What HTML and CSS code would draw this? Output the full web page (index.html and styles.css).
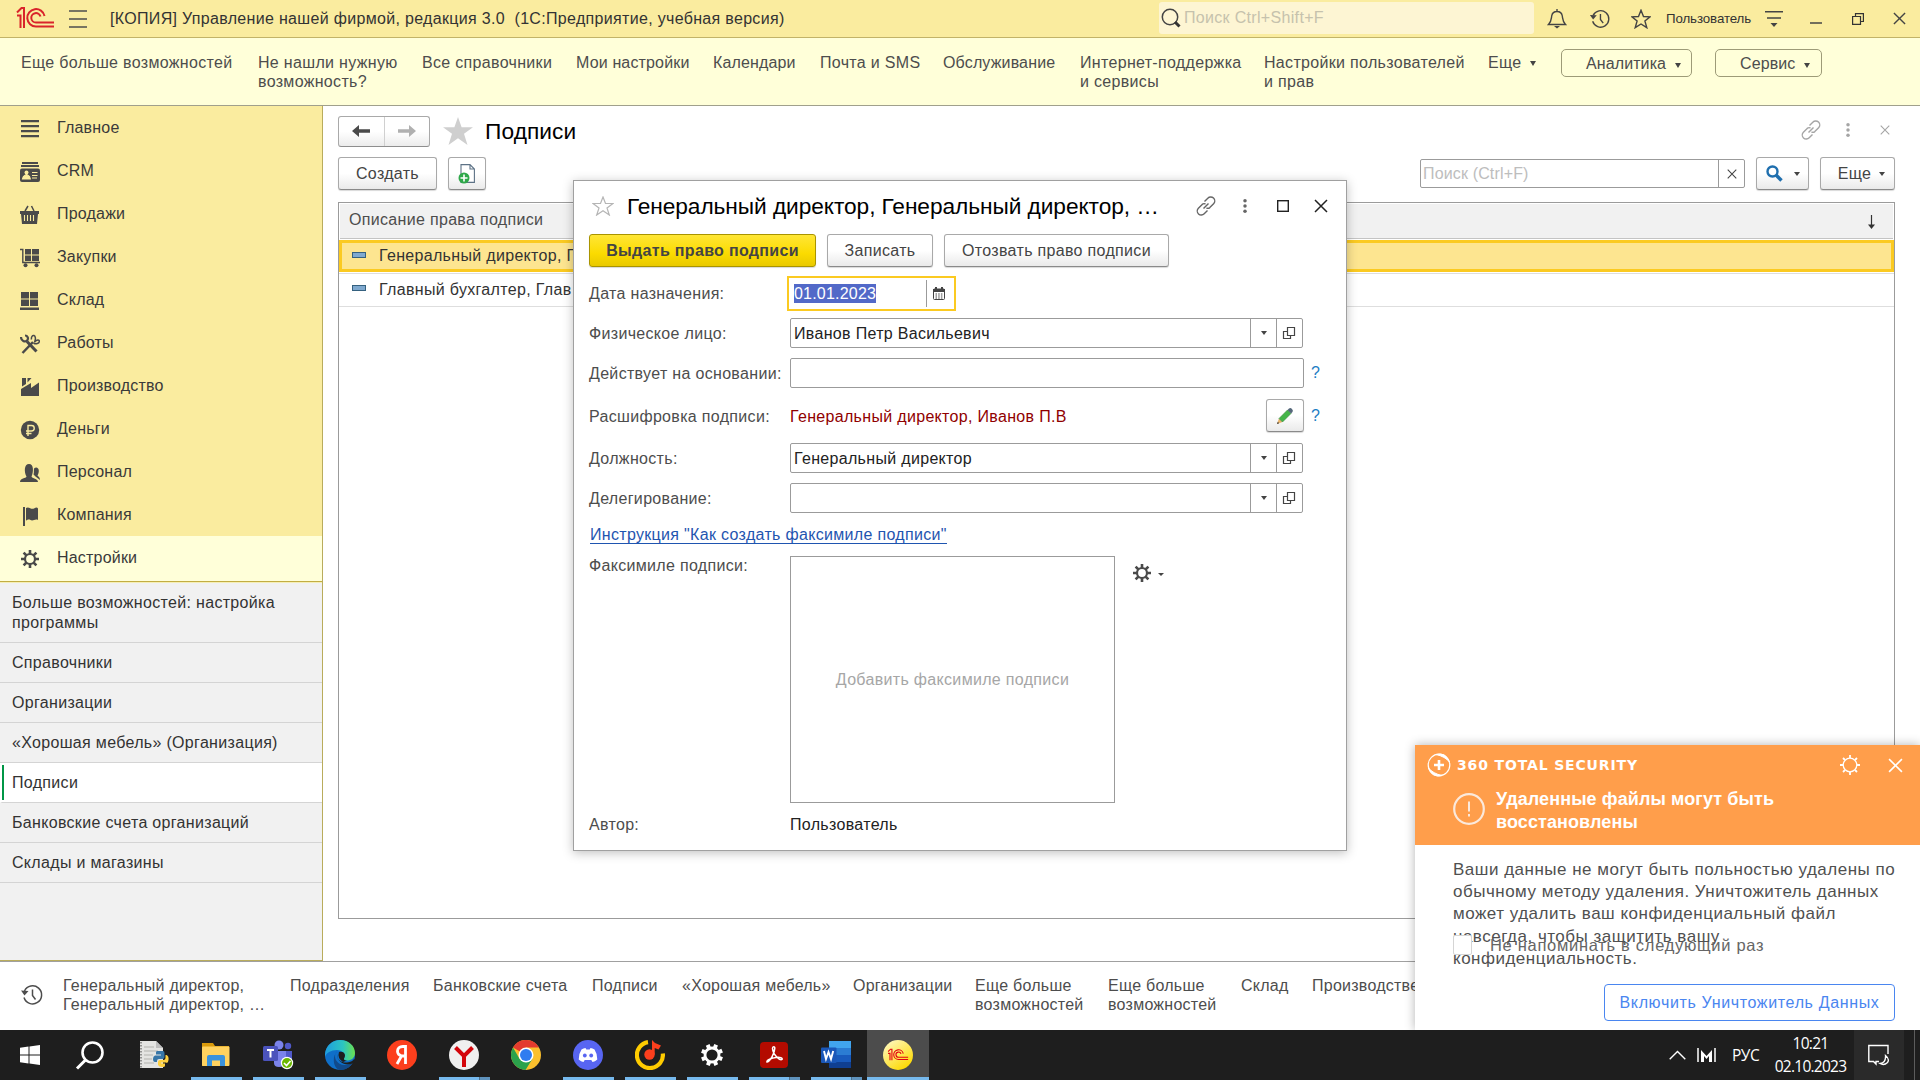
FILE: index.html
```html
<!DOCTYPE html>
<html lang="ru">
<head>
<meta charset="utf-8">
<title>Управление нашей фирмой</title>
<link rel="stylesheet" href="styles.css">
</head>
<body>
<svg class="defs" width="0" height="0">
  <defs>
    <symbol id="logo1c" viewBox="0 0 38 24">
      <g fill="none" stroke="currentColor" stroke-width="2">
        <path d="M1 6.500 5.500 2H8V22M1 9.500H4.500V22"/>
        <path d="M28.500 10A8.700 8.700 0 1 0 20 20.500H38"/>
        <path d="M24.500 10.500A4.700 4.700 0 1 0 20 16.500H38"/>
      </g>
    </symbol>
    <symbol id="history" viewBox="0 0 24 24">
      <path d="M4.500 8A9 9 0 1 1 4 14.500M12.500 6.500V12.500L15.500 16.500" fill="none" stroke="currentColor" stroke-width="1.500"/>
      <path d="M1 7.500 8.500 8 4.500 12.500Z" fill="currentColor"/>
    </symbol>
    <symbol id="gear" viewBox="0 0 20 20">
      <circle cx="10" cy="10" r="5" fill="none" stroke="currentColor" stroke-width="2.200"/>
      <path d="M10 1V5M10 15V19M1 10H5M15 10H19M3.600 3.600 6.500 6.500M13.500 13.500 16.400 16.400M3.600 16.400 6.500 13.500M13.500 6.500 16.400 3.600" stroke="currentColor" stroke-width="2.600"/>
    </symbol>
    <symbol id="link" viewBox="0 0 20 20">
      <g fill="none" stroke="currentColor" stroke-width="1.400">
        <path d="M8.500 5.500 11.800 2.200A3.900 3.900 0 0 1 17.600 7.800L13.800 11.600A3 3 0 0 1 10.500 12"/>
        <path d="M11.500 14.500 8.200 17.800A3.900 3.900 0 0 1 2.400 12.200L6.200 8.400A3 3 0 0 1 9.500 8"/>
        <path d="M7.500 12.500 12.500 7.500"/>
      </g>
    </symbol>
    <symbol id="cross" viewBox="0 0 14 14"><path d="M1 1 13 13M13 1 1 13" fill="none" stroke="currentColor" stroke-width="1.500"/></symbol>
    <symbol id="dots" viewBox="0 0 4 16"><circle cx="2" cy="2" r="2" fill="currentColor"/><circle cx="2" cy="8" r="2" fill="currentColor"/><circle cx="2" cy="14" r="2" fill="currentColor"/></symbol>
    <symbol id="open" viewBox="0 0 14 14"><path d="M5.500 1.500H12.500V9.500H5.500ZM5 5.500H1.500V12.500H8.500V10" fill="none" stroke="#444" stroke-width="1.200"/></symbol>
  </defs>
</svg>

<div class="screen">
  <header class="titlebar">
    <svg class="logo" width="38" height="24"><use href="#logo1c"/></svg>
    <svg class="burger" width="18" height="20"><path d="M0 2H18M0 10H18M0 18H18" stroke="#4d4d4d" stroke-width="1.500"/></svg>
    <span class="app-name">[КОПИЯ] Управление нашей фирмой, редакция 3.0&nbsp; (1С:Предприятие, учебная версия)</span>
    <div class="global-search">
      <svg width="20" height="20" viewBox="0 0 20 20"><circle cx="9" cy="9" r="7.700" fill="none" stroke="#444" stroke-width="1.500"/><path d="M14 14 18.500 18.500" stroke="#333" stroke-width="3"/></svg>
      <span>Поиск Ctrl+Shift+F</span>
    </div>
    <div class="title-icons">
      <svg width="20" height="20" viewBox="0 0 20 20"><path d="M1.500 15.500C4.500 12.500 4.200 10 4.700 7 5.200 4 7.500 2.500 10 2.500S14.800 4 15.300 7C15.800 10 15.500 12.500 18.500 15.500ZM10 0V3" fill="none" stroke="#444" stroke-width="1.400"/><path d="M7 17H13L10 19.500Z" fill="#444"/></svg>
      <svg width="22" height="22"><use href="#history"/></svg>
      <svg width="20" height="20" viewBox="0 0 20 20"><path d="M10 1.200 12.500 7.500 19 7.800 13.900 12 15.800 18.700 10 15 4.200 18.700 6.100 12 1 7.800 7.500 7.500Z" fill="none" stroke="#444" stroke-width="1.400"/></svg>
      <span class="user">Пользователь</span>
      <svg width="18" height="18" viewBox="0 0 18 18"><path d="M0 1.700H18M2 8H16" stroke="#444" stroke-width="1.500"/><path d="M5.500 13H12.500L9 17Z" fill="#444"/></svg>
      <svg width="12" height="14"><path d="M0 11H12" stroke="#444" stroke-width="1.500"/></svg>
      <svg width="12" height="12" viewBox="0 0 12 12"><path d="M.6 3.500H8.500V11.400H.6ZM3.500 3.500V.6H11.400V8.500H8.500" fill="none" stroke="#333" stroke-width="1.200"/></svg>
      <svg width="13" height="13"><use href="#cross"/></svg>
    </div>
  </header>

  <nav class="functions">
    <a>Еще больше возможностей</a>
    <a>Не нашли нужную<br>возможность?</a>
    <a>Все справочники</a>
    <a class="tight">Мои настройки</a>
    <a class="tight">Календари</a>
    <a>Почта и SMS</a>
    <a class="tight">Обслуживание</a>
    <a>Интернет-поддержка<br>и сервисы</a>
    <a>Настройки пользователей<br>и прав</a>
    <a>Еще<i class="caret gap"></i></a>
    <a class="pill">Аналитика<i class="caret"></i></a>
    <a class="pill">Сервис<i class="caret"></i></a>
  </nav>

  <div class="middle">
    <aside class="sidebar">
      <ul class="sections">
        <li><svg width="20" height="20" viewBox="0 0 20 20"><path d="M1 2.200H19M1 7.200H19M1 12.200H19M1 17.200H19" stroke="#4a4a4a" stroke-width="2.200"/></svg>Главное</li>
        <li><svg width="20" height="20" viewBox="0 0 20 20"><path d="M2 1H18M1 4H19" stroke="#4a4a4a" stroke-width="1.800"/><rect y="6.500" width="20" height="13.500" rx="2" fill="#4a4a4a"/><circle cx="6.500" cy="10.500" r="2" fill="#faec9f"/><path d="M2.500 17C3 13.500 5 13.500 6.500 12.500 8 13.500 10 13.500 10.300 17ZM12 10.500H17.500M12 13.500H17.500M12 16H17" fill="#faec9f" stroke="#faec9f" stroke-width="1.200"/></svg>CRM</li>
        <li><svg width="20" height="20" viewBox="0 0 20 20"><path d="M0 6H19V9H18L17 19H2L1 9H0Z" fill="#4a4a4a"/><path d="M5 6 8 1M14 6 11.500 1" stroke="#4a4a4a" stroke-width="1.500"/><path d="M4.500 10V16M7.500 10V16M10.500 10V16M13.500 10V16" stroke="#faec9f" stroke-width="1.100"/></svg>Продажи</li>
        <li><svg width="20" height="20" viewBox="0 0 20 20"><path d="M0 1.500H2.800V14.500H20" fill="none" stroke="#4a4a4a" stroke-width="1.400"/><path d="M5 1H11V6.500H5ZM12 1H19V6.500H12ZM5 7.500H11V13H5ZM12 7.500H19V13H12Z" fill="#4a4a4a"/><circle cx="5.500" cy="17.200" r="2" fill="#4a4a4a"/><circle cx="16.500" cy="17.200" r="2" fill="#4a4a4a"/></svg>Закупки</li>
        <li><svg width="20" height="20" viewBox="0 0 20 20"><path d="M1 1H9V7.500H1ZM10 1H18V7.500H10ZM1 8.500H9V15H1ZM10 8.500H18V15H10ZM0 16.500H19V19H0Z" fill="#4a4a4a"/></svg>Склад</li>
        <li><svg width="20" height="20" viewBox="0 0 20 20"><g fill="none" stroke="#4a4a4a"><path d="M2.500 19 13 8" stroke-width="2.500"/><path d="M7 7.500 16.500 17.500" stroke-width="3"/><path d="M1 3C1 7 5 8.500 7 6.500S7.500 1.500 5 1.500" stroke-width="2.200"/><path d="M11.500 5.500C11 3 12.500 1 14 1.500S16 5 14.500 8C17 5.500 19.500 5.500 19.300 7.500S16 10.500 13.500 9" stroke-width="1.500"/></g></svg>Работы</li>
        <li><svg width="20" height="20" viewBox="0 0 20 20"><path d="M1 19V12L11 6V11L19 5.500V19ZM2 1H6V7L2 9.500ZM7.500 1H11.500L7.500 5.500Z" fill="#4a4a4a"/></svg>Производство</li>
        <li><svg width="20" height="20" viewBox="0 0 20 20"><circle cx="10" cy="10" r="9.200" fill="#4a4a4a"/><path d="M8 16V5.500H11.500A2.700 2.700 0 0 1 11.500 11H6M6 13.500H11.500" fill="none" stroke="#faec9f" stroke-width="1.400"/></svg>Деньги</li>
        <li><svg width="20" height="20" viewBox="0 0 20 20"><path d="M0 19C0 15 6 15.500 6.500 13.500 4 9 4 1 9 1S13.500 9 11.500 13.500C12 15.500 18 15.500 18 19ZM13.500 11.500C14.300 9 13.500 6.500 14.200 5.200 16 3.500 19 4.500 18.800 8 18.700 10 18 11.500 17.500 12.500 18 13.500 20 14 20 17L15.500 13.500Z" fill="#4a4a4a"/></svg>Персонал</li>
        <li><svg width="20" height="20" viewBox="0 0 20 20"><path d="M3 1H5V20H3ZM6 2C9 0 11 4 14 2.500 16 1.500 17 1 18 2.500V14C15 12.500 13 15.500 10.500 14 8.500 13 7.500 14 6 14.500Z" fill="#4a4a4a"/></svg>Компания</li>
        <li class="current"><svg width="20" height="20"><use href="#gear"/></svg>Настройки</li>
      </ul>
      <ul class="commands">
        <li class="two">Больше возможностей: настройка программы</li>
        <li>Справочники</li>
        <li>Организации</li>
        <li>«Хорошая мебель» (Организация)</li>
        <li class="active">Подписи</li>
        <li>Банковские счета организаций</li>
        <li>Склады и магазины</li>
      </ul>
    </aside>

    <main class="page">
      <div class="page-head">
        <div class="nav-group">
          <span><svg width="18" height="14" viewBox="0 0 18 14"><path d="M0 7 7 1V5.200H18V8.800H7V13Z" fill="#4a4a4a"/></svg></span>
          <span><svg width="18" height="14" viewBox="0 0 18 14"><path d="M18 7 11 1V5.200H0V8.800H11V13Z" fill="#b0b0b0"/></svg></span>
        </div>
        <svg class="fav" width="30" height="28" viewBox="0 0 30 28"><path d="M15 0 18.600 10.200H30L21 16.800 24.500 28 15 21.200 5.500 28 9 16.800 0 10.200H11.400Z" fill="#cfcfcf"/></svg>
        <h1>Подписи</h1>
        <div class="head-icons">
          <svg width="20" height="20"><use href="#link"/></svg>
          <svg width="4" height="14"><use href="#dots"/></svg>
          <svg width="10" height="10"><use href="#cross"/></svg>
        </div>
      </div>
      <div class="toolbar">
        <button class="btn create">Создать</button>
        <button class="btn copy"><svg width="18" height="20" viewBox="0 0 18 20"><path d="M3 .6H12L16.400 5V18.400H3ZM12 .6V5H16.400" fill="#fff" stroke="#5d7286" stroke-width="1.100"/><circle cx="6" cy="14" r="5.500" fill="#2fa84a"/><path d="M2.500 14H9.500M6 10.500V17.500" stroke="#fff" stroke-width="1.600"/></svg></button>
        <div class="list-search"><span>Поиск (Ctrl+F)</span><b><svg width="10" height="10"><use href="#cross"/></svg></b></div>
        <button class="btn find"><svg width="17" height="17" viewBox="0 0 17 17"><circle cx="6.500" cy="6.500" r="5" fill="none" stroke="#1f6fae" stroke-width="2.400"/><path d="M10 10 15.500 15.500" stroke="#1f6fae" stroke-width="3.400"/></svg><i class="caret small"></i></button>
        <button class="btn more">Еще<i class="caret small"></i></button>
      </div>
      <div class="grid">
        <div class="grid-head"><span>Описание права подписи</span><svg width="9" height="14" viewBox="0 0 9 14"><path d="M4.500 0V12" stroke="#333" stroke-width="1.200"/><path d="M1 9.500H8L4.500 14Z" fill="#333"/></svg></div>
        <div class="grid-row selected"><em></em>Генеральный директор, Г</div>
        <div class="grid-row"><em></em>Главный бухгалтер, Глав</div>
      </div>
    </main>
  </div>

  <footer class="recent">
    <svg width="24" height="24"><use href="#history"/></svg>
    <a>Генеральный директор,<br>Генеральный директор, …</a>
    <a>Подразделения</a>
    <a>Банковские счета</a>
    <a>Подписи</a>
    <a>«Хорошая мебель»</a>
    <a>Организации</a>
    <a>Еще больше<br>возможностей</a>
    <a>Еще больше<br>возможностей</a>
    <a>Склад</a>
    <a>Производстве</a>
  </footer>

  <div class="taskbar">
    <div class="apps">
      <div class="app start"><svg width="20" height="20" viewBox="0 0 20 20"><path d="M0 2.800 8.500 1.600V9.500H0ZM9.500 1.400 20 0V9.500H9.500ZM0 10.500H8.500V18.400L0 17.200ZM9.500 10.500H20V20L9.500 18.600Z" fill="#fff"/></svg></div>
      <div class="app find-app"><svg width="30" height="30" viewBox="0 0 30 30"><circle cx="17.500" cy="12.500" r="10" fill="none" stroke="#fff" stroke-width="2.600"/><path d="M10.500 20 2 28.500" stroke="#fff" stroke-width="3"/></svg></div>
      <div class="app"><svg width="30" height="30" viewBox="0 0 30 30"><path d="M1 1H17L24 8V28H1Z" fill="#e4e4e2"/><path d="M17 1V8H24Z" fill="#bdbdbd"/><path d="M5 7H15M5 11H19M5 15H14M5 19H13M5 23H15" stroke="#c2c2c0" stroke-width="1.500"/><path d="M2 2V28" stroke="#777" stroke-width="1.500" stroke-dasharray="1.500 1.500"/><path d="M18 11H24Q25.500 11 25.500 13V17Q25.500 19 23.500 19H20Q18 19 18 21V22H16Q14 22 14 19T16 15.500H22V14.500H17V12.500Q17 11 18 11Z" fill="#3776a8"/><path d="M26.500 15H27.500Q30 16 29.500 20T27 22.500H22V23.500H26V25.500Q26 27 23 27T19 25V22Q19 20 21 20H24.500Q26.500 20 26.500 18Z" fill="#ffd140"/></svg></div>
      <div class="app run"><svg width="30" height="30" viewBox="0 0 30 30"><path d="M1 3H12L14 6H28V26H1Z" fill="#d99a0b"/><rect x="1" y="6.500" width="27.500" height="19.500" rx="1" fill="#ffd25f"/><path d="M6 26V17Q6 15 8 15H22Q24 15 24 17V26H19V20.500H11V26Z" fill="#3a92dc"/></svg></div>
      <div class="app run"><svg width="32" height="32" viewBox="0 0 32 32"><circle cx="17" cy="6" r="4.500" fill="#7b83eb"/><circle cx="26" cy="7" r="3.200" fill="#5059c9"/><path d="M12 12H24V24Q22 28 17 28T12 24Z" fill="#7b83eb"/><path d="M24 12H30V21Q29 25 24 25Z" fill="#5059c9"/><rect x="1" y="7" width="15" height="15" rx="1.500" fill="#4b53bc"/><path d="M5 11H12M8.500 11V18.500" stroke="#fff" stroke-width="2"/><circle cx="25" cy="24" r="6.200" fill="#fff"/><circle cx="25" cy="24" r="5" fill="#6bb700"/><path d="M22 24 24.500 26.500 28.500 22" fill="none" stroke="#fff" stroke-width="1.600"/></svg></div>
      <div class="app run"><svg width="30" height="30" viewBox="0 0 30 30"><defs><linearGradient id="e1" x1="0" x2="1"><stop offset="0" stop-color="#1e9de0"/><stop offset=".6" stop-color="#2cc5c0"/><stop offset="1" stop-color="#6be04e"/></linearGradient></defs><circle cx="15" cy="15" r="15" fill="#0f6fc9"/><path d="M0 14C1 5 8 0 15 0 24 0 30 6 30 13 30 18 26 20.500 22 20.500 19 20.500 18 19.500 19 18 21 14 17 10 12 10 6 10 1 13 0 17Z" fill="url(#e1)"/><path d="M12 11.500C8 15 10 24 19 25 23 25.500 26 24 27.500 23 24 29 18 30.500 14 30 8 27 7 17 12 11.500Z" fill="#114a8b"/><path d="M12.500 14C11 19 16 23 22 22.500 26 22 28 21 29 19L32 22 27.500 23.500C20 27 11 21 12.500 14Z" fill="#1e1e1e"/><path d="M14 12Q19 11 20 15 20 17 19 18.500 18.500 20.500 22 20.500L18 22Q12 18 14 12Z" fill="#1e1e1e"/></svg></div>
      <div class="app"><svg width="30" height="30" viewBox="0 0 30 30"><circle cx="15" cy="15" r="15" fill="#fc3f1d"/><path d="M18.500 24V6.500H15.800C12.500 6.500 10.500 8.500 10.500 11.300 10.500 14 12 15.300 15 16H18.500M14.500 16 10 24" fill="none" stroke="#fff" stroke-width="2.800"/></svg></div>
      <div class="app run multi"><svg width="30" height="30" viewBox="0 0 30 30"><circle cx="15" cy="15" r="15" fill="#f0f0f0"/><path d="M6.500 7.500 15 16 23.500 7.500M15 15V27" fill="none" stroke="#d4060c" stroke-width="4"/></svg></div>
      <div class="app"><svg width="30" height="30" viewBox="0 0 30 30"><circle cx="15" cy="15" r="15" fill="#fbc02d"/><path d="M15 15 2 7.500A15 15 0 0 1 28 7.500H15Z" fill="#e33b2e"/><path d="M2 7.500A15 15 0 0 0 14.500 30L21.500 18.700 15 15 8.500 18.700Z" fill="#2ba24c"/><circle cx="15" cy="15" r="7.500" fill="#fff"/><circle cx="15" cy="15" r="6" fill="#2f7cf0"/></svg></div>
      <div class="app run"><svg width="30" height="30" viewBox="0 0 30 30"><circle cx="15" cy="15" r="15" fill="#5865f2"/><path d="M8.500 9.500Q10.500 8.300 12.500 8L13.300 9.500H16.700L17.500 8Q19.500 8.300 21.500 9.500 24.500 14 24.300 19.500 22 21.500 19.500 22L18.300 20H11.700L10.500 22Q8 21.500 5.700 19.500 5.500 14 8.500 9.500Z" fill="#fff"/><ellipse cx="11.800" cy="15.500" rx="1.900" ry="2.100" fill="#5865f2"/><ellipse cx="18.200" cy="15.500" rx="1.900" ry="2.100" fill="#5865f2"/></svg></div>
      <div class="app run"><svg width="30" height="30" viewBox="0 0 30 30"><path d="M13 2.200A13 13 0 1 0 27.800 13.500" fill="none" stroke="#fc0" stroke-width="4.200"/><circle cx="14.500" cy="14.500" r="5.200" fill="#fc3f1d"/><path d="M17 14V0L20 3 26 5.500 23.500 9.500 19.700 8V14.500Z" fill="#fc3f1d"/></svg></div>
      <div class="app run"><svg width="24" height="24" viewBox="0 0 24 24"><circle cx="12" cy="12" r="7" fill="none" stroke="#fff" stroke-width="2.800"/><path d="M12 1V5M12 19V23M1 12H5M19 12H23M4.200 4.200 7 7M17 17 19.800 19.800M4.200 19.800 7 17M17 7 19.800 4.200" stroke="#fff" stroke-width="4" transform="rotate(22 12 12)"/></svg></div>
      <div class="app run multi"><svg width="28" height="28" viewBox="0 0 28 28"><rect y="1" width="28" height="26" rx="4" fill="#b30b00"/><path d="M7 21C6 19 12 17 16 16.500 20 16 23 17 22 18.500 20 20 13 14 12.500 7.500 12.500 5 15 5 14.800 7.500 14.500 12 10.500 20 7 21Z" fill="none" stroke="#fff" stroke-width="1.500"/></svg></div>
      <div class="app run multi"><svg width="30" height="28" viewBox="0 0 30 28"><path d="M8 0H30V7H8Z" fill="#41a5ee"/><path d="M8 7H30V14H8Z" fill="#2b7cd3"/><path d="M8 14H30V21H8Z" fill="#185abd"/><path d="M8 21H30V27H8Z" fill="#103f91"/><rect x="0" y="6.500" width="15.500" height="15.500" rx="1" fill="#1a57b8"/><path d="M3 10 5 18 7.500 11 10 18 12.200 10" fill="none" stroke="#fff" stroke-width="1.900"/></svg></div>
      <div class="app run front"><svg width="30" height="30" viewBox="0 0 30 30"><defs><linearGradient id="y1" x1="0" y1="0" x2=".7" y2="1"><stop offset="0" stop-color="#fffbd0"/><stop offset="1" stop-color="#fdd900"/></linearGradient></defs><circle cx="15" cy="15" r="15" fill="url(#y1)"/><svg x="4.500" y="8" width="21" height="13.500" color="#e3000f"><use href="#logo1c"/></svg></svg></div>
    </div>
    <div class="tray">
      <svg width="17" height="10" viewBox="0 0 17 10"><path d="M.7 9.300 8.500 1.500 16.300 9.300" fill="none" stroke="#fff" stroke-width="1.400"/></svg>
      <svg class="monitor" width="19" height="14" viewBox="0 0 19 14"><path d="M1 0V14M18 0V14" stroke="#fff" stroke-width="1.500"/><path d="M4 14V2L9.500 8 15 2V14H12V8L9.500 11 7 8V14Z" fill="#fff"/></svg>
      <span class="lang">РУС</span>
      <div class="clock"><span>10:21</span><span>02.10.2023</span></div>
      <div class="notice"><svg width="22" height="22" viewBox="0 0 22 22"><path d="M11 17.500H8V20L5.500 17.500H.8V1.500H20V10" fill="none" stroke="#fff" stroke-width="1.400"/><path d="M17.500 11.500Q22 15 19.500 18.500 16 22 12 19.500 18 19 17.500 11.500Z" fill="none" stroke="#fff" stroke-width="1.300"/></svg></div>
      <i class="peek"></i>
    </div>
  </div>

  <section class="dialog">
    <div class="dialog-head">
      <svg width="22" height="20" viewBox="0 0 22 20"><path d="M11 1 13.500 7.500H21L15 12 17.300 19 11 14.700 4.700 19 7 12 1 7.500H8.500Z" fill="none" stroke="#b5b5b5" stroke-width="1.200"/></svg>
      <h2>Генеральный директор, Генеральный директор, …</h2>
      <div class="dialog-icons">
        <svg width="20" height="20"><use href="#link"/></svg>
        <svg width="4" height="14"><use href="#dots"/></svg>
        <svg width="12" height="12"><rect x=".7" y=".7" width="10.600" height="10.600" fill="none" stroke="#222" stroke-width="1.400"/></svg>
        <svg width="14" height="14" color="#222"><use href="#cross"/></svg>
      </div>
    </div>
    <div class="dialog-buttons">
      <button class="btn primary">Выдать право подписи</button>
      <button class="btn save">Записать</button>
      <button class="btn revoke">Отозвать право подписи</button>
    </div>
    <div class="form">
      <label>Дата назначения:</label>
      <div class="date"><mark>01.01.2023</mark><b><svg width="12" height="13" viewBox="0 0 12 13"><rect x=".5" y="2" width="11" height="10.500" rx="1" fill="#fff" stroke="#444"/><path d="M0 2H12V5H0ZM2 0H4V3H2ZM8 0H10V3H8Z" fill="#444"/><path d="M2.500 7H9.800M2.500 9H9.800M2.500 11H9.800" stroke="#444" stroke-width="1.200" stroke-dasharray="1.500 1.200"/></svg></b></div>

      <label>Физическое лицо:</label>
      <div class="field"><span>Иванов Петр Васильевич</span><b><i class="caret small"></i></b><b><svg width="14" height="14"><use href="#open"/></svg></b></div>

      <label>Действует на основании:</label>
      <div class="line"><div class="field wide"></div><a class="help">?</a></div>

      <label>Расшифровка подписи:</label>
      <div class="line"><span class="decode">Генеральный директор, Иванов П.В</span><button class="btn edit"><svg width="18" height="18" viewBox="0 0 18 18"><path d="M1 17 3 11.500 6.500 15Z" fill="#e8b36a"/><path d="M3 11.500 11.500 3 15 6.500 6.500 15Z" fill="#45b549" stroke="#39863c" stroke-width=".6"/><path d="M11.500 3 13 1.500Q14.500 .5 16 2T16.500 5L15 6.500Z" fill="#55677a"/><path d="M1 17 1.800 14.800 3.200 16.200Z" fill="#333"/></svg></button><a class="help">?</a></div>

      <label>Должность:</label>
      <div class="field"><span>Генеральный директор</span><b><i class="caret small"></i></b><b><svg width="14" height="14"><use href="#open"/></svg></b></div>

      <label>Делегирование:</label>
      <div class="field"><span></span><b><i class="caret small"></i></b><b><svg width="14" height="14"><use href="#open"/></svg></b></div>

      <a class="howto">Инструкция "Как создать факсимиле подписи"</a>

      <label class="top">Факсимиле подписи:</label>
      <div class="fax"><div class="fax-box">Добавить факсимиле подписи</div><svg width="20" height="20"><use href="#gear"/></svg><i class="caret tiny"></i></div>

      <label>Автор:</label>
      <span class="author">Пользователь</span>
    </div>
  </section>

  <section class="toast">
    <div class="toast-head">
      <div class="brand">
        <svg width="24" height="24" viewBox="0 0 24 24"><circle cx="12" cy="12" r="10.800" fill="none" stroke="#fff" stroke-width="1.200"/><path d="M9 1.500Q19-1 22.500 9 18 3.500 9 1.500ZM15 22.500Q5 25 1.500 15 6 20.500 15 22.500Z" fill="#fff" stroke="#fff"/><path d="M7 12H17M12 7V17" stroke="#fff" stroke-width="2.600"/></svg>
        <span>360 TOTAL SECURITY</span>
        <svg class="toast-gear" width="20" height="20" viewBox="0 0 20 20"><circle cx="10" cy="10" r="6.800" fill="none" stroke="#fff" stroke-width="1.300"/><path d="M10 0V3M10 17V20M0 10H3M17 10H20M3 3 5 5M15 15 17 17M3 17 5 15M15 5 17 3" stroke="#fff" stroke-width="1.800"/></svg>
        <svg width="15" height="15" color="#fff"><use href="#cross"/></svg>
      </div>
      <div class="alert">
        <svg width="32" height="32" viewBox="0 0 32 32"><circle cx="16" cy="16" r="14.800" fill="none" stroke="#fbe9dc" stroke-width="2.200"/><path d="M16 8.500V18.500M16 21V23.500" stroke="#fbe9dc" stroke-width="2"/></svg>
        <strong>Удаленные файлы могут быть<br>восстановлены</strong>
      </div>
    </div>
    <p>Ваши данные не могут быть польностью удалены по<br>обычному методу удаления. Уничтожитель данных<br>может удалить ваш конфиденциальный файл<br>навсегда, чтобы защитить вашу<br>конфиденциальность.</p>
    <div class="remind"><i></i><span>Не напоминать в следующий раз</span></div>
    <button class="enable">Включить Уничтожитель Данных</button>
  </section>
</div>
</body>
</html>
```
FILE: styles.css
```css
* { box-sizing: border-box; }
body { margin: 0; font: 16px/20px "Liberation Sans", Arial, sans-serif; color: #333; background: #fff; }
ul, h1, h2, p { margin: 0; padding: 0; list-style: none; font-weight: normal; }
svg { display: block; flex: none; }
.defs { position: absolute; }
.screen { position: relative; width: 1920px; height: 1080px; overflow: hidden; display: flex; flex-direction: column; letter-spacing: .32px; }
button { font: inherit; letter-spacing: inherit; color: inherit; }
.caret { display: inline-block; flex: none; border: 3.500px solid transparent; border-top: 5px solid #444; border-bottom: 0; }
.caret.small { border-width: 4px 3px 0; }
.caret.tiny { border-width: 3px 3px 0; }

.titlebar { flex: none; height: 38px; background: #faec9f; border-bottom: 1px solid #c2b368; display: flex; align-items: center; }
.logo { margin-left: 16px; margin-top: -1px; color: #d9242b; }
.burger { margin-left: 15px; }
.app-name { margin-left: 23px; width: 1049px; white-space: nowrap; }
.global-search { width: 375px; height: 32px; background: #fdf5d3; border-radius: 3px; display: flex; align-items: center; gap: 3px; padding-left: 2px; color: #c6c2ad; margin-top: -1px; }
.title-icons { display: grid; grid-template-columns: 42px 42px 35px 99px 45px 42px 41px 20px; margin-left: 13px; align-items: center; color: #444; }
.user { font-size: 13.300px; letter-spacing: -.1px; color: #333; }

.functions { flex: none; height: 68px; background: #ffffd9; border-bottom: 1px solid #a0a08c; display: grid; grid-template-columns: 237px 164px 154px 137px 107px 123px 137px 184px 224px 73px 154px 108px; padding: 14.500px 0 0 21px; line-height: 19px; color: #4d4d4d; white-space: nowrap; }
.functions a { padding-top: .5px; }
.functions .tight { letter-spacing: .15px; }
.caret.gap { margin: 0 0 2px 8px; }
.functions .pill { width: 131px; height: 28px; border: 1px solid #9d9b78; border-radius: 5px; margin-top: -4px; padding: 4px 0 0 24px; letter-spacing: .1px; }
.functions .pill:last-child { width: 107px; }
.pill .caret { margin: 0 0 1px 9px; }

.middle { flex: none; height: 855px; display: flex; }
.sidebar { flex: none; width: 323px; background: #f1f1f1; border-right: 1px solid #b9ac5c; border-bottom: 1px solid #b9ac5c; }
.sections { background: #faec9f; border-bottom: 1px solid #c2ad42; height: 476px; }
.sections li { height: 43px; display: flex; align-items: center; gap: 17px; padding-left: 20px; color: #3a3a3a; letter-spacing: .2px; }
.sections svg { margin-top: 2px; color: #4a4a4a; }
.sections .current { height: 45px; padding-bottom: 2px; background: #ffffd9; }
.commands { border-top: 1px solid #f5efb6; }
.commands li { height: 40px; border-bottom: 1px solid #d4d4d4; padding: 10px 12px 0; }
.commands .two { height: 60px; }
.commands .active { background: #fff; border-left: 2px solid #fff; position: relative; padding-left: 10px; }
.commands .active::before { content: ""; position: absolute; left: 0; top: 2px; width: 2px; height: 35px; background: #009646; }

.page { flex: 1; padding: 10px 25px 0 15px; }
.page-head { height: 30px; display: flex; align-items: center; }
.nav-group { display: flex; width: 92px; height: 31px; border: 1px solid #a9a9a9; border-bottom-color: #8e8e8e; border-radius: 3px; background: linear-gradient(#fff 50%, #ececec); }
.nav-group span { flex: 1; display: flex; align-items: center; justify-content: center; }
.nav-group span + span { border-left: 1px solid #d0d0d0; }
.fav { margin-left: 13px; }
h1 { font-size: 22.700px; line-height: 28px; color: #000; margin-left: 12px; letter-spacing: .1px; }
.head-icons { margin-left: auto; display: flex; align-items: center; gap: 25px; color: #a5a5a5; padding: 0 5px 2px 0; }
.head-icons svg:last-child { margin-left: 5px; }
.toolbar { display: flex; align-items: center; margin-top: 11px; height: 33px; }
.btn { height: 33px; border: 1px solid #a9a9a9; border-bottom: 1px solid #8a8a8a; border-radius: 3px; background: linear-gradient(#fff 50%, #eaeaea); display: flex; align-items: center; justify-content: center; padding: 0; color: #444; white-space: nowrap; box-shadow: 0 1px 1px #d9d9d9; }
.create { width: 99px; }
.copy { width: 38px; margin-left: 11px; }
.list-search { margin-left: auto; width: 325px; height: 29px; border: 1px solid #9b9b9b; border-radius: 2px; display: flex; color: #bdbdbd; }
.list-search span { flex: 1; padding: 4px 2px; letter-spacing: .15px; }
.list-search b, .field b { flex: none; width: 26px; border-left: 1px solid #9b9b9b; display: flex; align-items: center; justify-content: center; color: #444; }
.find { width: 53px; margin-left: 11px; gap: 11px; }
.more { width: 75px; margin-left: 11px; gap: 8px; padding-left: 8px; }
.grid { margin-top: 12px; height: 717px; border: 1px solid #9b9b9b; }
.grid-head { height: 37px; border: 1px solid #fff; border-bottom: 0; background: #f1f1f1; box-shadow: inset 0 -1px #fff, inset 0 -2px #c4c4c4; display: flex; justify-content: space-between; padding: 6px 17px 0 9px; color: #4d4d4d; }
.grid-head svg { margin-top: 5px; }
.grid-row { height: 34px; border-bottom: 1px solid #dedede; display: flex; align-items: center; padding-left: 13px; white-space: nowrap; }
.grid-row em { width: 14px; height: 6px; background: #7fa9cf; border: 1px solid #35617f; margin: -3px 13px 0 0; }
.grid-row.selected { height: 32px; border: 3px solid #fbca21; background: #fde590; padding-left: 10px; box-shadow: 0 1px #fff, 0 2px #dedede; margin-bottom: 1px; }

.recent { flex: none; height: 69px; border-top: 1px solid #a0a0a0; display: grid; grid-template-columns: 43px 227px 143px 159px 90px 171px 122px 133px 133px 71px 120px; padding: 14px 0 0 20px; line-height: 19px; color: #4d4d4d; white-space: nowrap; letter-spacing: .25px; }
.recent svg { margin-top: 7px; }

.taskbar { flex: none; height: 50px; background: #1e1e1e; display: flex; justify-content: space-between; color: #fff; }
.apps { display: flex; }
.app { width: 62px; height: 50px; display: flex; align-items: center; justify-content: center; position: relative; }
.app.start { width: 60px; }
.app.find-app { width: 63px; padding-right: 3px; }
.app.run::after { content: ""; position: absolute; left: 6px; bottom: 0; width: 51px; height: 3px; background: #76b9ed; }
.app.multi::after { background: linear-gradient(90deg, #76b9ed 40px, #3c4c59 40px, #5f93bd 41px); }
.app.front { background: #4c4c4c; }
.app.front::after { left: 0; width: 62px; }
.tray { display: flex; align-items: center; font: 16px/23px "Open Sans", "Noto Sans", sans-serif; letter-spacing: -.5px; }
.monitor { margin: 0 16px 0 11px; }
.lang { width: 43px; font-size: 15.500px; }
.clock { width: 71px; margin-right: 8px; display: flex; flex-direction: column; align-items: center; white-space: nowrap; font-size: 15.500px; letter-spacing: -.75px; }
.notice { width: 50px; height: 50px; background: #2a2a2a; display: flex; align-items: center; justify-content: center; }
.peek { width: 6px; height: 50px; margin-left: 10px; border-left: 1px solid #5c5c5c; }

.dialog { position: absolute; left: 573px; top: 180px; width: 774px; height: 671px; background: #fff; border: 1px solid #a0a0a0; box-shadow: 0 2px 10px rgba(0,0,0,.25); padding: 0 15px; }
.dialog-head { height: 53px; display: flex; align-items: center; padding: 0 0 3px 3px; }
h2 { font-size: 22.700px; line-height: 28px; letter-spacing: -.06px; color: #000; margin-left: 13px; white-space: nowrap; }
.dialog-icons { margin-left: auto; display: flex; align-items: center; color: #666; padding-right: 3px; gap: 26px; }
.dialog-icons svg:first-child { margin-right: 1px; }
.dialog-icons svg:nth-child(2) { margin-right: 4px; margin-left: 0; }
.dialog-icons svg:last-child { margin-left: -1px; }
.dialog-buttons { display: flex; gap: 11px; height: 33px; }
.primary { width: 227px; background: linear-gradient(#ffe636, #fbdb00 60%, #e9c900); border-color: #a99400; font-weight: bold; }
.save { width: 106px; }
.revoke { width: 225px; }
.form { display: grid; grid-template-columns: 201px 1fr; grid-template-rows: 40px 40px 40px 45px 40px 40px 32px 257px 34px; align-items: center; padding-top: 6px; color: #4d4d4d; white-space: nowrap; }
.form label, .decode, .author { padding-top: 2px; }
.field { width: 513px; height: 30px; border: 1px solid #9b9b9b; border-radius: 2px; display: flex; color: #222; }
.field.wide { width: 514px; }
.field span { flex: 1; padding: 5px 3px 0; }
.field b:last-child { padding-right: 1px; }
.date { width: 169px; height: 35px; margin-left: -3px; border: 2px solid #fbca21; display: flex; align-items: center; padding-left: 5px; }
mark { background: #5269c8; color: #fff; height: 19px; line-height: 19px; width: 83px; letter-spacing: .2px; }
.date b { margin-left: 50px; width: 32px; height: 27px; border-left: 1px solid #9b9b9b; display: flex; align-items: center; padding-left: 6px; }
.line { display: flex; align-items: center; }
.help { margin-left: 7px; color: #1c7dc4; }
.decode { color: #900000; flex: none; width: 476px; }
.edit { width: 38px; }
.howto { grid-column: 1 / 3; justify-self: start; margin: 2px 0 0 1px; color: #1f55b0; line-height: 17px; border-bottom: 1px solid #1f55b0; }
.form .top { align-self: start; padding-top: 6px; }
.fax { display: flex; align-self: start; padding-top: 6px; }
.fax-box { width: 325px; height: 247px; border: 1px solid #9b9b9b; color: #a6a6a6; display: flex; align-items: center; justify-content: center; }
.fax svg { margin: 7px 6px 0 17px; color: #4a4a4a; }
.fax .caret { margin-top: 17px; }
.author { color: #222; }

.toast { position: absolute; left: 1415px; top: 745px; width: 505px; height: 285px; background: #fff; box-shadow: 0 0 10px rgba(0,0,0,.3); color: #505050; clip-path: inset(-15px 0 0 -15px); }
.toast-head { height: 100px; background: #ff9e4b; color: #fff; padding: 8px 17px 0 12px; }
.brand { display: flex; align-items: center; height: 24px; }
.brand span { flex: 1; margin-left: 6px; font: bold 14px "DejaVu Sans", sans-serif; letter-spacing: .85px; }
.toast-gear { margin-right: 28px; }
.alert { display: flex; margin: 9px 0 0 26px; gap: 11px; line-height: 23px; }
.alert svg { margin-top: 7px; }
.alert strong { font-size: 18px; letter-spacing: .1px; padding-top: 2px; }
.toast p { padding: 14px 0 0 38px; font-size: 17px; line-height: 22.200px; letter-spacing: .5px; white-space: nowrap; }
.remind { position: absolute; left: 38px; top: 190px; display: flex; gap: 18px; font-size: 16.500px; letter-spacing: .7px; color: #666; }
.remind i { width: 19px; height: 20px; background: #fff; border: 1px solid #d5d5d5; border-radius: 2px; }
.enable { position: absolute; right: 25px; top: 239px; width: 291px; height: 37px; border: 1px solid #4a86f0; border-radius: 4px; background: #fff; color: #4a86f0; letter-spacing: .65px; padding: 0; white-space: nowrap; }
```
